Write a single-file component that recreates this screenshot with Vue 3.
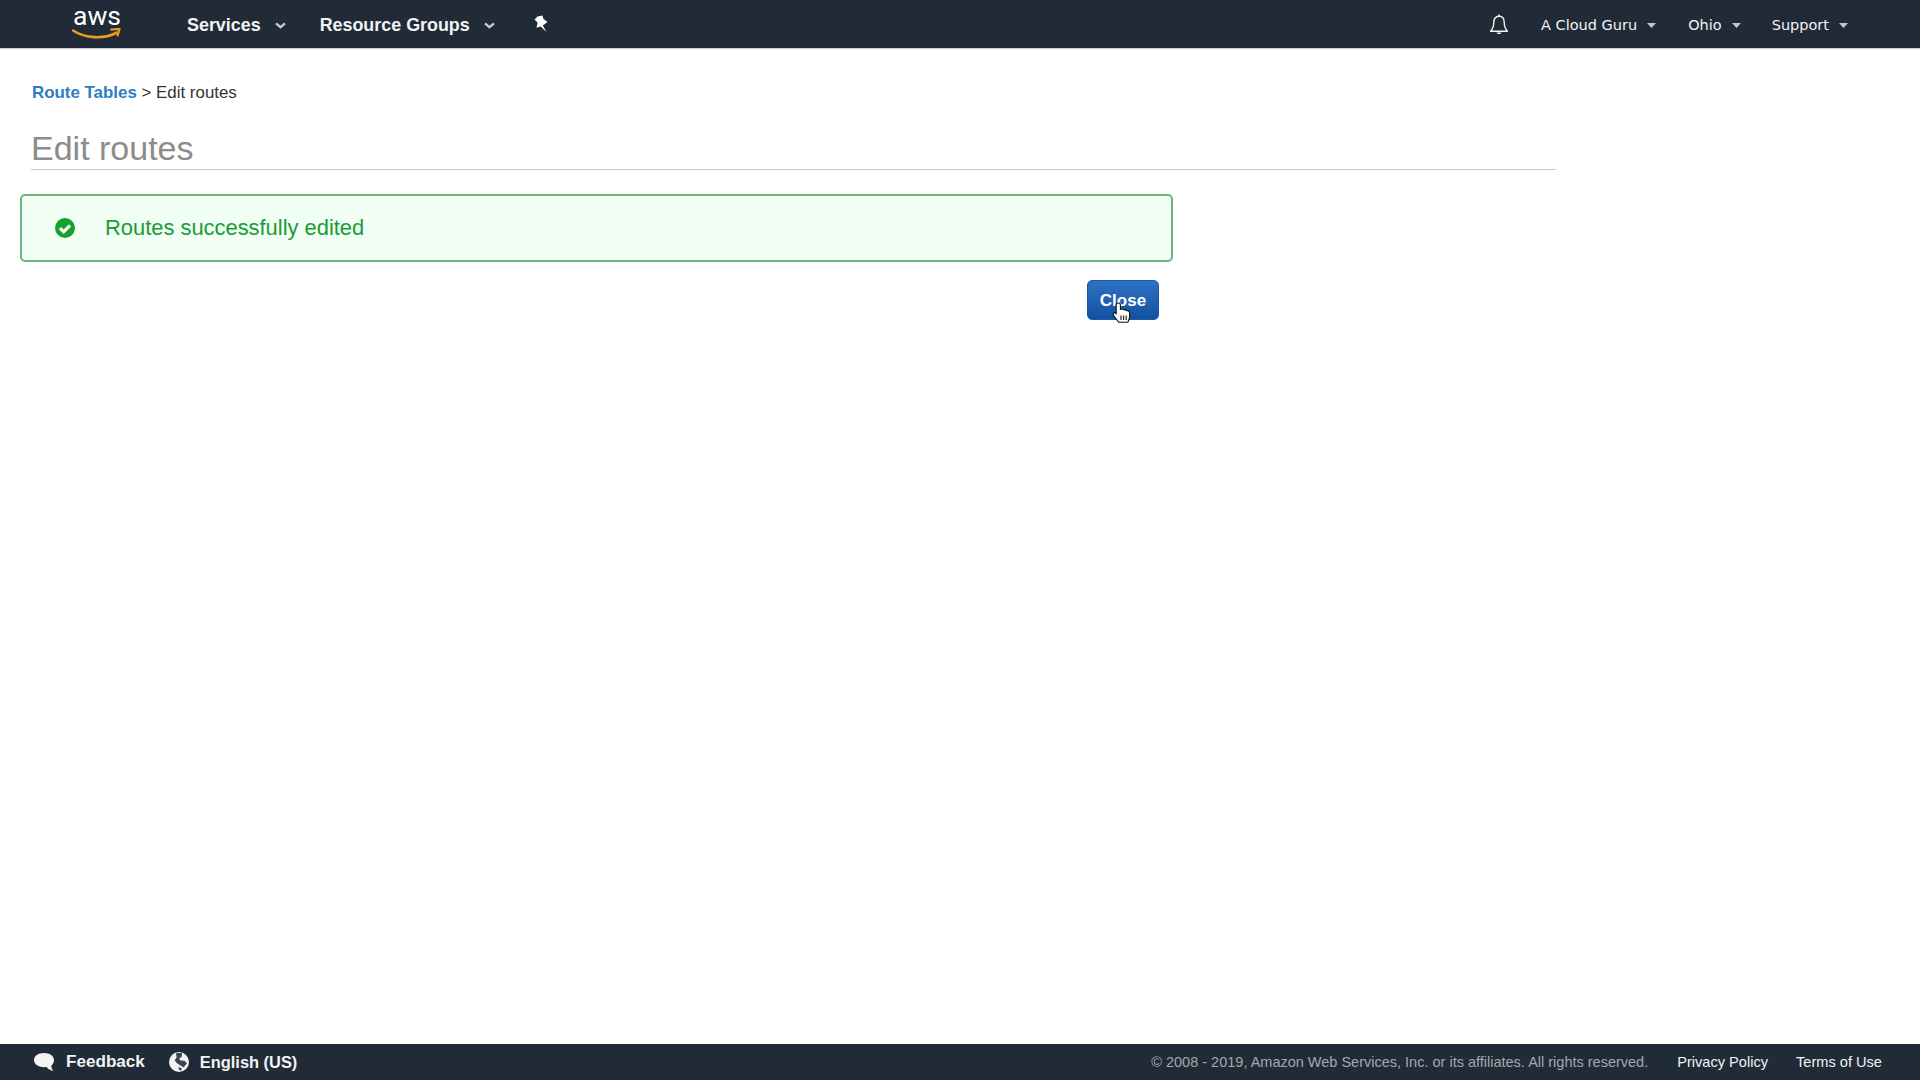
<script setup>
const rightItems = [
  { label: 'A Cloud Guru', cls: 'acct' },
  { label: 'Ohio', cls: 'region' },
  { label: 'Support', cls: 'support' }
]
</script>

<template>
  <div class="page">
    <header class="nav">
      <div class="logo">
        <span class="logo-text">aws</span>
        <svg class="smile" width="50" height="12" viewBox="0 0 50 12" fill="none">
          <path d="M1 2.5C13 10.5 32 11.5 45 4.5" stroke="#ec9a24" stroke-width="2.6" stroke-linecap="round" />
          <path d="M38.5 1.6L47.6 1L45.4 8.2" stroke="#ec9a24" stroke-width="2.2" fill="none" stroke-linejoin="round" />
        </svg>
      </div>
      <a class="nav-main services">Services
        <svg class="chev" width="11" height="7" viewBox="0 0 11 7"><path d="M1 1.4L5.5 5.2L10 1.4" stroke="#c8ccd0" stroke-width="2.3" fill="none" /></svg>
      </a>
      <a class="nav-main groups">Resource Groups
        <svg class="chev" width="11" height="7" viewBox="0 0 11 7"><path d="M1 1.4L5.5 5.2L10 1.4" stroke="#c8ccd0" stroke-width="2.3" fill="none" /></svg>
      </a>
      <svg class="pin" width="16" height="18" viewBox="0 0 16 18">
        <path d="M4.5 1.5L9.5 0.5L10.5 4L14.5 7L9.8 10.5L13.5 17L7.6 11.5L3.5 12.8L4.6 7.5L1.5 4.5Z" fill="#fff" />
      </svg>
      <div class="spacer"></div>
      <svg class="bell" width="20" height="22" viewBox="0 0 20 22" fill="none">
        <path d="M10 2.2C6.4 2.2 4.8 5 4.8 8.2C4.8 12.6 3.6 15 1.6 17.2H18.4C16.4 15 15.2 12.6 15.2 8.2C15.2 5 13.6 2.2 10 2.2Z" stroke="#f2f3f3" stroke-width="1.4" stroke-linejoin="round" />
        <path d="M10 0.6V2.2" stroke="#f2f3f3" stroke-width="1.6" />
        <path d="M7.6 18.4C8 20.4 12 20.4 12.4 18.4Z" fill="#f2f3f3" />
      </svg>
      <a v-for="item in rightItems" :key="item.label" class="nav-side" :class="item.cls">
        {{ item.label }}
        <svg class="caret" width="9" height="5" viewBox="0 0 9 5"><path d="M0 0H9L4.5 5Z" fill="#c4c8cc" /></svg>
      </a>
    </header>

    <main class="content">
      <div class="crumbs"><a class="crumb-link">Route Tables</a> &gt; Edit routes</div>
      <h1 class="title">Edit routes</h1>
      <div class="alert">
        <svg class="check" width="20" height="20" viewBox="0 0 20 20">
          <circle cx="10" cy="10" r="10" fill="#16a02f" />
          <path d="M5 10.2L8.6 13.8L15 7.4" stroke="#fff" stroke-width="3.2" fill="none" />
        </svg>
        <span class="alert-text">Routes successfully edited</span>
      </div>
      <div class="actions">
        <button class="close">Close
          <svg class="hand" width="19" height="21" viewBox="0 0 19 21">
            <path d="M4.2 3C4.2 0.4 8.4 0.4 8.4 3V7.4C9.8 6.8 11 7 11.5 7.8C12.8 7.4 13.8 7.8 14.2 8.6C15.8 8.4 17.6 9.2 17.6 11V14.6C17.6 16.8 16.6 18.4 15.8 20.2H6.6C5.6 18.2 3.4 16.6 1.4 13.4C0.2 11.4 2.4 10 3.4 11L4.2 12Z" fill="#fff" stroke="#111" stroke-width="1.1" stroke-linejoin="round" />
            <path d="M9 13.4V18M11.6 13.4V18M14.2 13.4V18" stroke="#111" stroke-width="1.1" />
          </svg>
        </button>
      </div>
    </main>

    <footer class="foot">
      <svg class="bubble" width="22" height="21" viewBox="0 0 22 21">
        <path d="M11 1C16.6 1 21 3.8 21 8C21 10.6 20 12.4 18.4 13.6C18.2 15.6 19 17.6 20.4 19C17.6 18.6 15 17 13.6 15C7 15.8 1 13.2 1 8C1 3.8 5.4 1 11 1Z" fill="#f2f3f3" />
      </svg>
      <span class="foot-main feedback">Feedback</span>
      <svg class="globe" width="20" height="20" viewBox="0 0 20 20">
        <circle cx="10" cy="10" r="10" fill="#f2f3f3" />
        <path d="M7 1.2L12.8 0.8L13 4.4L10.2 6.4L11.4 8.6L15.4 8.8L18 11.2L14.6 15.6L12 13.8L8.2 11.6L5.6 8.2L7.6 5.4Z" fill="#3b4652" />
        <path d="M9.4 14.8L13 16.4L12 18.8L10 17.8Z" fill="#3b4652" />
      </svg>
      <span class="foot-main english">English (US)</span>
      <div class="spacer"></div>
      <span class="copy">© 2008 - 2019, Amazon Web Services, Inc. or its affiliates. All rights reserved.</span>
      <a class="foot-link privacy">Privacy Policy</a>
      <a class="foot-link terms">Terms of Use</a>
    </footer>
  </div>
</template>

<style>
html, body { margin: 0; background: #fff; }
</style>

<style scoped>
.page {
  width: 1920px;
  height: 1080px;
  display: flex;
  flex-direction: column;
  font-family: "Liberation Sans", Arial, sans-serif;
  background: #fff;
  overflow: hidden;
}
.nav {
  height: 48px;
  flex: none;
  display: flex;
  align-items: center;
  background: #212a37;
  border-bottom: 1px solid #c9ccd0;
  color: #fff;
}
.spacer { flex: 1; }
.logo {
  width: 50px;
  margin-left: 72px;
  margin-right: 65px;
  height: 48px;
  display: flex;
  flex-direction: column;
  align-items: center;
  color: #fff;
}
.logo-text {
  font-family: Roboto, sans-serif;
  font-size: 26.5px;
  font-weight: 400;
  line-height: 25px;
  height: 25px;
  margin-top: 3px;
}
.smile { display: block; margin-top: 0; flex: none; }
.nav-main {
  display: flex;
  align-items: center;
  padding-top: 2px;
  font-size: 17.9px;
  font-weight: 700;
  color: #f2f3f3;
}
.chev { margin-left: 14px; margin-top: 1px; }
.services { margin-right: 34px; }
.groups { margin-right: 38px; }
.pin { margin-top: -1px; }
.bell { margin-right: 32px; margin-top: 2px; }
.nav-side {
  display: flex;
  align-items: center;
  padding-top: 1px;
  font-family: "DejaVu Sans", sans-serif;
  font-size: 14.5px;
  color: #f2f3f3;
}
.caret { margin-left: 10px; margin-top: 1px; }
.acct { margin-right: 32px; }
.region { margin-right: 31px; }
.support { margin-right: 72px; }
.content {
  flex: 1;
}
.crumbs {
  margin: 34px 0 0 32px;
  font-size: 16.9px;
  line-height: 20px;
  color: #333;
}
.crumb-link { color: #2e7cc4; font-weight: 700; }
.title {
  width: 1525px;
  margin: 24px 0 0 31px;
  border-bottom: 1px solid #c8c8c8;
  font-size: 34px;
  line-height: 42px;
  font-weight: 400;
  color: #8c8c8c;
}
.alert {
  width: 1153px;
  height: 68px;
  margin: 24px 0 0 20px;
  box-sizing: border-box;
  display: flex;
  align-items: center;
  padding-left: 33px;
  background: #f2fff5;
  border: 2px solid #6bb67d;
  border-radius: 5px;
}
.check { margin-top: -1px; }
.alert-text {
  margin-left: 30px;
  font-size: 21.9px;
  color: #189c34;
}
.actions {
  width: 1159px;
  margin-top: 18px;
  display: flex;
  justify-content: flex-end;
}
.close {
  position: relative;
  width: 72px;
  height: 40px;
  padding: 1px 0 0;
  border: 1px solid #1d5ba6;
  border-radius: 5px;
  background: linear-gradient(#2d72c4, #15509f);
  color: #fff;
  font-family: inherit;
  font-size: 17px;
  font-weight: 700;
}
.hand { position: absolute; left: 24px; top: 21px; }
.foot {
  height: 36px;
  flex: none;
  display: flex;
  align-items: center;
  background: #212a37;
  color: #f2f3f3;
}
.bubble { margin-left: 33px; margin-right: 11px; }
.foot-main { font-size: 17.1px; font-weight: 700; }
.english { font-size: 16.4px; }
.feedback { margin-right: 24px; }
.globe { margin-right: 11px; }
.copy { font-size: 14.5px; color: #a3a9ad; margin-right: 29px; }
.foot-link { font-size: 14.6px; color: #f2f3f3; }
.privacy { margin-right: 28px; }
.terms { margin-right: 38px; }
</style>
